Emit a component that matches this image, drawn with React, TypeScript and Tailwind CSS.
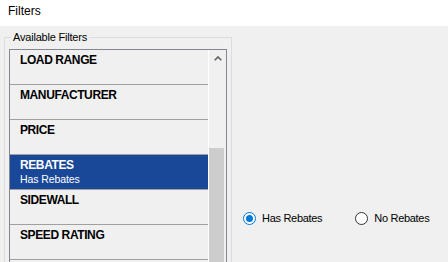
import React from "react";

type Filter = { name: string; value?: string };

const filters: Filter[] = [
  { name: "LOAD RANGE" },
  { name: "MANUFACTURER" },
  { name: "PRICE" },
  { name: "REBATES", value: "Has Rebates" },
  { name: "SIDEWALL" },
  { name: "SPEED RATING" },
];

const selected = "REBATES";

function Radio({ label, checked }: { label: string; checked?: boolean }) {
  return (
    <label className="flex items-center gap-[6px]">
      <span
        className={`flex h-[13px] w-[13px] items-center justify-center rounded-full border bg-white ${
          checked ? "border-[#0078d7]" : "border-[#333333]"
        }`}
      >
        {checked && <span className="h-[7px] w-[7px] rounded-full bg-[#0078d7]" />}
      </span>
      <span className="text-[11px] leading-[14px] tracking-[-0.3px] text-black">{label}</span>
    </label>
  );
}

export default function App() {
  return (
    <div
      className="h-[262px] w-[448px] overflow-hidden bg-[#f0f0f0] text-black"
      style={{ fontFamily: '"Liberation Sans", Arial, sans-serif' }}
    >
      <div className="h-[26px] bg-white pl-[8px] pt-[4px] text-[12px] leading-[14px]">Filters</div>

      <div className="flex items-start">
        {/* Available filters group */}
        <fieldset className="ml-[4px] mt-[4px] h-[300px] w-[228px] border border-[#dcdcdc] px-[4px]">
          <legend className="ml-[2px] px-[2px] text-[11px] leading-[14px] tracking-[-0.2px]">
            Available Filters
          </legend>

          <div className="mt-[5px] flex h-[260px] border border-[#828790] bg-[#f0f0f0]">
            <ul className="w-[198px]">
              {filters.map((f) => {
                const isSel = f.name === selected;
                return (
                  <li
                    key={f.name}
                    className={`h-[35px] border-b border-[#a0a0a0] pl-[10px] pt-[3px] ${
                      isSel ? "bg-[#1a4899] text-white" : ""
                    }`}
                  >
                    <p className="text-[12px] font-bold leading-[14px] tracking-[-0.4px]">{f.name}</p>
                    {isSel && f.value && (
                      <p className="text-[10.5px] leading-[14px] tracking-[-0.1px]">{f.value}</p>
                    )}
                  </li>
                );
              })}
            </ul>

            <div className="w-[1px] bg-white" />

            {/* scrollbar */}
            <div className="flex w-[17px] flex-col">
              <div className="flex h-[17px] items-center justify-center pt-[2px]">
                <svg width="8" height="5" viewBox="0 0 8 5">
                  <polyline points="0.7,4.3 4,1 7.3,4.3" fill="none" stroke="#606060" strokeWidth="1.6" />
                </svg>
              </div>
              <div className="mt-[84px] h-[200px] w-[15px] bg-[#cdcdcd]" />
            </div>
          </div>
        </fieldset>

        {/* Value options */}
        <div className="flex flex-1 items-center gap-[33px] pl-[11px] pt-[185px]">
          <Radio label="Has Rebates" checked />
          <Radio label="No Rebates" />
        </div>
      </div>
    </div>
  );
}
